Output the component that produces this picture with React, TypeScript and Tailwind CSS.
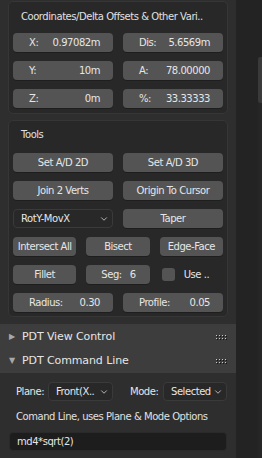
import { ChevronDown } from 'lucide-react'

const font = { fontFamily: '"DejaVu Sans", "Liberation Sans", sans-serif' }

function NumField({ label, value }: { label: string; value: string }) {
  return (
    <div className="h-[19px] rounded-[4px] bg-[#545454] flex items-center justify-between pl-[16px] pr-[13px] text-[#e6e6e6] shadow-[0_1px_0_#1e1e1e]">
      <span>{label}</span>
      <span>{value}</span>
    </div>
  )
}

function Btn({ children }: { children: React.ReactNode }) {
  return (
    <div className="h-[19px] rounded-[4px] bg-[#545454] flex items-center justify-center text-[#e6e6e6] whitespace-nowrap overflow-hidden shadow-[0_1px_0_#1e1e1e]">
      {children}
    </div>
  )
}

function Drop({ children, className = '' }: { children: React.ReactNode; className?: string }) {
  return (
    <div className={`h-[19px] rounded-[4px] bg-[#282828] border border-[#3a3a3a] flex items-center justify-between pl-[7px] pr-[3px] text-[#e6e6e6] whitespace-nowrap ${className}`}>
      <span>{children}</span>
      <ChevronDown size={10} strokeWidth={2} className="text-[#cfcfcf]" />
    </div>
  )
}

function Grip() {
  return (
    <svg width="11" height="5" viewBox="0 0 11 5">
      {[0, 3, 6, 9].map((x) =>
        [0, 3].map((y) => (
          <g key={`${x}-${y}`}>
            <rect x={x + 1} y={y + 1} width="1" height="1" fill="#111" />
            <rect x={x} y={y} width="1" height="1" fill="#c8c8c8" />
          </g>
        ))
      )}
    </svg>
  )
}

function Header({ title, open }: { title: string; open: boolean }) {
  return (
    <div className="h-[24px] flex items-center pl-[9px] pr-[9px] text-[11px] tracking-[-0.1px] text-[#e6e6e6]">
      <span className="w-[13px] text-[8px] text-[#a8a8a8]">{open ? '▼' : '▶'}</span>
      <span className="flex-1">{title}</span>
      <Grip />
    </div>
  )
}

export default function App() {
  return (
    <div className="w-[262px] h-[458px] flex bg-[#232323] overflow-hidden text-[10px] tracking-[-0.45px]" style={font}>
      <div className="w-[236px] bg-[#2e2e2e] flex flex-col pt-[1px]">
        <div className="ml-[8px] w-[220px] h-[113px] rounded-[5px] border border-[#363636] bg-[#282828] px-[4px] pt-[7px]">
          <div className="h-[17px] pl-[8px] text-[#e0e0e0] whitespace-nowrap">Coordinates/Delta Offsets &amp; Other Vari..</div>
          <div className="mt-[7px] grid grid-cols-2 gap-x-[10px] gap-y-[9px]">
            <NumField label="X:" value="0.97082m" />
            <NumField label="Dis:" value="5.6569m" />
            <NumField label="Y:" value="10m" />
            <NumField label="A:" value="78.00000" />
            <NumField label="Z:" value="0m" />
            <NumField label="%:" value="33.33333" />
          </div>
        </div>

        <div className="mt-[6px] ml-[8px] w-[220px] h-[197px] rounded-[5px] border border-[#363636] bg-[#282828] px-[4px] pt-[6px]">
          <div className="h-[16px] pl-[8px] text-[#e0e0e0]">Tools</div>
          <div className="mt-[10px] grid grid-cols-2 gap-x-[10px] gap-y-[9px]">
            <Btn>Set A/D 2D</Btn>
            <Btn>Set A/D 3D</Btn>
            <Btn>Join 2 Verts</Btn>
            <Btn>Origin To Cursor</Btn>
            <Drop>RotY-MovX</Drop>
            <Btn>Taper</Btn>
          </div>
          <div className="mt-[9px] grid grid-cols-3 gap-x-[10px] gap-y-[9px]">
            <Btn>Intersect All</Btn>
            <Btn>Bisect</Btn>
            <Btn>Edge-Face</Btn>
            <Btn>Fillet</Btn>
            <div className="h-[19px] rounded-[4px] bg-[#545454] flex items-center justify-between pl-[15px] pr-[14px] text-[#e6e6e6] shadow-[0_1px_0_#1e1e1e]">
              <span>Seg:</span>
              <span>6</span>
            </div>
            <div className="h-[19px] flex items-center pl-[2px] gap-[9px] text-[#e6e6e6]">
              <div className="w-[13px] h-[13px] rounded-[3px] bg-[#545454]" />
              <span>Use ..</span>
            </div>
          </div>
          <div className="mt-[9px] grid grid-cols-2 gap-x-[10px]">
            <NumField label="Radius:" value="0.30" />
            <NumField label="Profile:" value="0.05" />
          </div>
        </div>

        <div className="mt-[7px] bg-[#3d3d3d] pt-[1px]">
          <Header title="PDT View Control" open={false} />
          <Header title="PDT Command Line" open={true} />
        </div>

        <div className="flex-1 bg-[#2e2e2e] pl-[9px] pr-[9px] pt-[9px]">
          <div className="flex items-center h-[19px] text-[#e6e6e6]">
            <span className="w-[39px] pl-[7px]">Plane:</span>
            <Drop className="w-[65px]">Front(X..</Drop>
            <span className="ml-[17px] w-[33px]">Mode:</span>
            <Drop className="w-[64px]">Selected</Drop>
          </div>
          <div className="mt-[8px] h-[16px] pl-[7px] text-[#e0e0e0] whitespace-nowrap">Comand Line, uses Plane &amp; Mode Options</div>
          <div className="mt-[7px] h-[19px] rounded-[4px] bg-[#1d1d1d] border border-[#2a2a2a] flex items-center pl-[7px] text-[#e6e6e6]">
            md4*sqrt(2)
          </div>
        </div>
      </div>
      <div className="w-[22px] bg-[#232323]" />
      <div className="flex-1 bg-[#2b2b2b] flex flex-col">
        <div className="h-[57px] bg-[#232323]" />
        <div className="h-[46px] bg-[#3a3a3a] rounded-l-[3px]" />
        <div className="flex-1 bg-[#262626]" />
      </div>
    </div>
  )
}
